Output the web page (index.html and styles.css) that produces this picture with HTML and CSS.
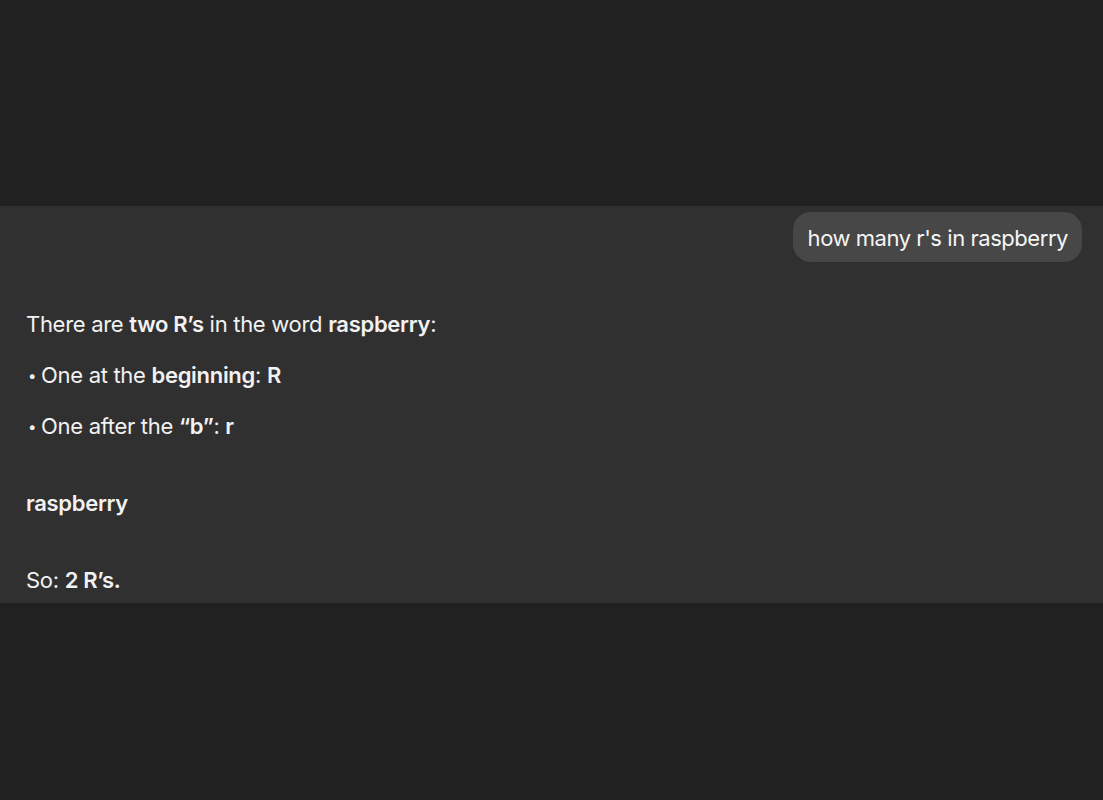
FILE: index.html
```html
<!DOCTYPE html>
<html>
<head>
<meta charset="utf-8">
<link rel="stylesheet" href="styles.css">
</head>
<body>
<div class="top"></div>
<main class="panel">
  <div class="user-row">
    <div class="bubble">how many r's in raspberry</div>
  </div>
  <div class="answer">
    <p>There are <b>two R’s</b> in the word <b>raspberry</b>:</p>
    <p><span class="dot">•</span>One at the <b>beginning</b>: <b>R</b></p>
    <p><span class="dot">•</span>One after the <b>“b”</b>: <b>r</b></p>
    <p class="gap"><b>raspberry</b></p>
    <p class="gap">So: <b>2 R’s.</b></p>
  </div>
</main>
</body>
</html>
```
FILE: styles.css
```css
html, body {
  margin: 0;
  padding: 0;
  background: #212121;
  color: #f2f2f2;
  font-family: Inter, "Noto Sans", sans-serif;
}
.top {
  height: 206px;
}
.panel {
  background: #303030;
  padding: 6px 21px 10px 26px;
}
.user-row {
  display: flex;
  justify-content: flex-end;
}
.bubble {
  background: #474747;
  border-radius: 18px;
  height: 50px;
  padding: 2px 14px 0 15px;
  box-sizing: border-box;
  display: flex;
  align-items: center;
  font-size: 22px;
  letter-spacing: -0.45px;
  color: #f5f5f5;
}
.answer {
  margin-top: 49px;
  font-size: 22px;
  letter-spacing: -0.3px;
}
.answer p {
  margin: 0 0 25px;
  line-height: 26px;
}
.answer p:last-child {
  margin-bottom: 0;
}
.answer p.gap {
  margin-top: 51px;
}
.answer b {
  font-weight: 600;
}
.dot {
  display: inline-block;
  font-size: 15px;
  line-height: 0;
  width: 13px;
  padding-left: 2px;
  vertical-align: 2px;
}
```
